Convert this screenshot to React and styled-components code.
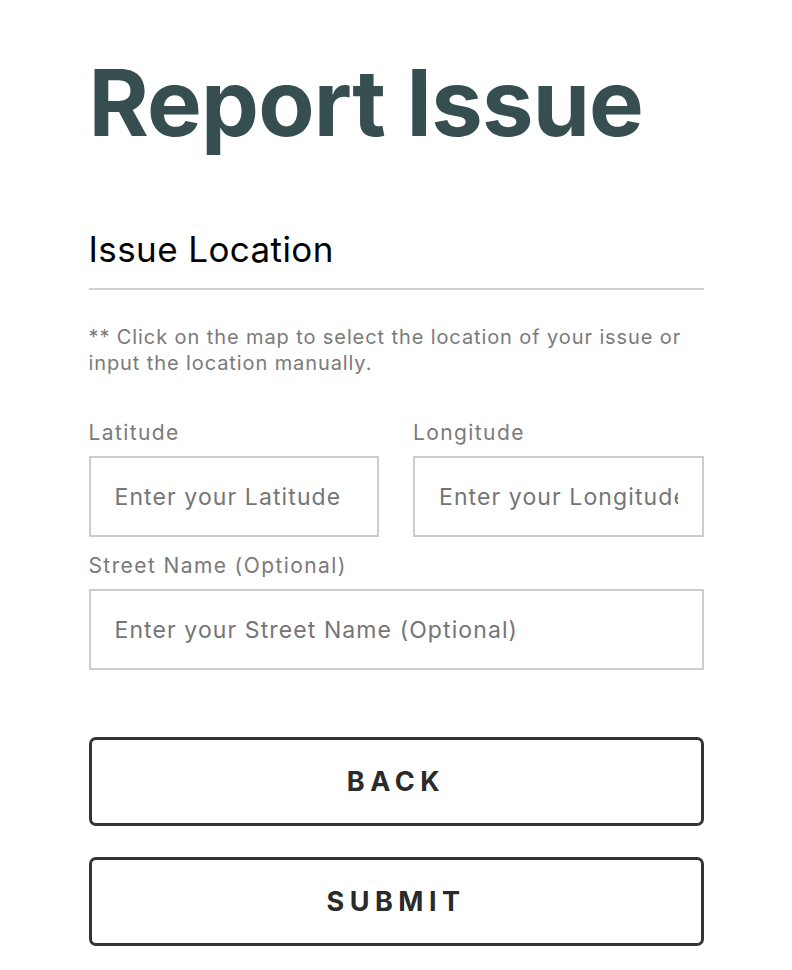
import React from "react";
import styled, { createGlobalStyle } from "styled-components";

const GlobalStyle = createGlobalStyle`
  body {
    margin: 0;
    background: #ffffff;
    font-family: Inter, Roboto, "Liberation Sans", sans-serif;
  }
  * { box-sizing: border-box; }
`;

const Page = styled.div`
  width: 615px;
  margin: 0 auto;
  padding-top: 48px;
`;

const Title = styled.h1`
  margin: 0;
  font-weight: 700;
  font-size: 92px;
  line-height: 110px;
  letter-spacing: -0.8px;
  color: #364e4f;
`;

const SectionTitle = styled.h2`
  margin: 69px 0 0;
  padding-bottom: 17px;
  font-weight: 400;
  font-size: 35px;
  line-height: 44px;
  letter-spacing: 0.4px;
  color: #000;
  border-bottom: 2px solid #d2d2d2;
`;

const Note = styled.p`
  margin: 34px 0 0;
  font-size: 20px;
  line-height: 26px;
  letter-spacing: 0.9px;
  color: #7a7a7a;
`;

const Row = styled.div`
  display: grid;
  grid-template-columns: ${(p) => (p.cols === 2 ? "1fr 1fr" : "1fr")};
  column-gap: 34px;
  margin-top: ${(p) => p.top || 0}px;
`;

const Field = styled.label`
  display: flex;
  flex-direction: column;
`;

const Label = styled.span`
  font-size: 21px;
  line-height: 26px;
  letter-spacing: 1.4px;
  color: #7a7a7a;
  margin-bottom: 10px;
`;

const Input = styled.input`
  width: 100%;
  height: 81px;
  border: 2px solid #cccccc;
  border-radius: 0;
  padding: 0 24px;
  font-family: Inter, Roboto, "Liberation Sans", sans-serif;
  font-size: 23px;
  letter-spacing: 1.1px;
  color: #333;
  outline: none;
  &::placeholder {
    color: #757575;
  }
`;

const Actions = styled.div`
  display: flex;
  flex-direction: column;
  gap: 31px;
  margin-top: 67px;
`;

const Button = styled.button`
  height: 89px;
  width: 100%;
  background: #fff;
  border: 3px solid #333333;
  border-radius: 7px;
  font-family: Inter, Roboto, "Liberation Sans", sans-serif;
  font-weight: 700;
  font-size: 27px;
  letter-spacing: 5.5px;
  color: #2a2a2a;
  cursor: pointer;
`;

export default function App() {
  return (
    <>
      <GlobalStyle />
      <Page>
        <Title>Report Issue</Title>
        <SectionTitle>Issue Location</SectionTitle>
        <Note>
          ** Click on the map to select the location of your issue or input the
          location manually.
        </Note>
        <Row cols={2} top={44}>
          <Field>
            <Label>Latitude</Label>
            <Input placeholder="Enter your Latitude" />
          </Field>
          <Field>
            <Label>Longitude</Label>
            <Input placeholder="Enter your Longitude" />
          </Field>
        </Row>
        <Row top={16}>
          <Field>
            <Label>Street Name (Optional)</Label>
            <Input placeholder="Enter your Street Name (Optional)" />
          </Field>
        </Row>
        <Actions>
          <Button>BACK</Button>
          <Button>SUBMIT</Button>
        </Actions>
      </Page>
    </>
  );
}
